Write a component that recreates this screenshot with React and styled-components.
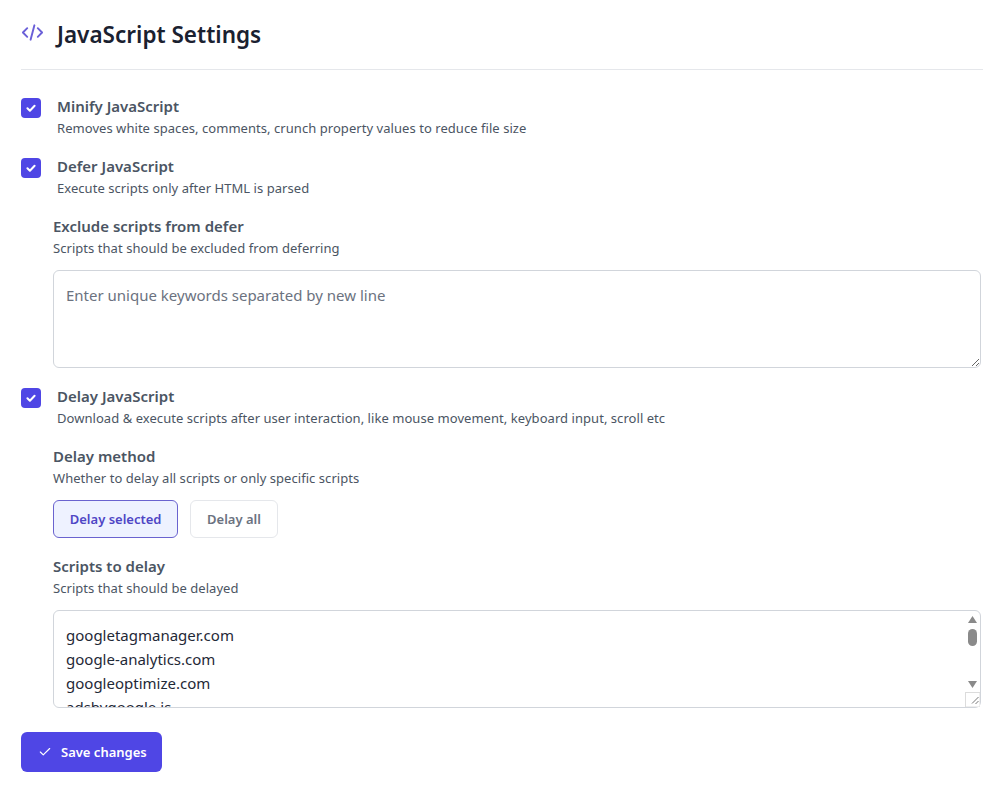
import React from "react";
import styled, { createGlobalStyle } from "styled-components";

const Global = createGlobalStyle`
  html, body { margin: 0; padding: 0; background: #fff; }
  body { font-family: "Noto Sans", "Liberation Sans", sans-serif; color: #374151; }
  * { box-sizing: border-box; }
`;

const Page = styled.main`
  width: 997px;
  height: 796px;
  overflow: hidden;
  padding: 0 14px 0 21px;
`;

const Header = styled.header`
  display: flex;
  align-items: center;
  gap: 13px;
  height: 70px;
  border-bottom: 1px solid #e5e7eb;
`;

const HeaderIcon = styled.svg`
  width: 23px;
  height: 23px;
  margin-top: -4px;
  color: #6a5fd8;
  flex: none;
`;

const Title = styled.h1`
  margin: 0;
  font-size: 22.5px;
  line-height: 32px;
  font-weight: 600;
  color: #1a2130;
`;

const Options = styled.div`
  display: flex;
  flex-direction: column;
  padding-top: 28px;
`;

const CheckRow = styled.div`
  display: flex;
  gap: 16px;
  margin-bottom: ${(p) => p.$mb || 0}px;
`;

const CheckBox = styled.span`
  width: 20px;
  height: 20px;
  border-radius: 4px;
  background: #4f46e5;
  display: flex;
  align-items: center;
  justify-content: center;
  flex: none;
`;

const CheckText = styled.div`
  display: flex;
  flex-direction: column;
  margin-top: -2px;
`;

const Label = styled.div`
  font-size: 15px;
  line-height: 20px;
  font-weight: 600;
  color: #4b5563;
`;

const Hint = styled.div`
  font-size: 13px;
  line-height: 20px;
  margin-top: 2px;
  letter-spacing: 0.05px;
  color: #4b5563;
`;

const Sub = styled.section`
  margin: ${(p) => p.$mt || 0}px 2px ${(p) => p.$mb || 0}px 32px;
`;

const FieldWrap = styled.div`
  position: relative;
  margin-top: 12px;
  height: 98px;
`;

const Area = styled.textarea`
  display: block;
  width: 100%;
  height: 98px;
  padding: 12px;
  border: 1px solid #d1d5db;
  border-radius: 6px;
  outline: none;
  resize: vertical;
  overflow: hidden;
  background: #fff;
  color: #1f2937;
  font-family: inherit;
  font-size: 15px;
  line-height: 24px;
  &::placeholder { color: #6b7280; opacity: 1; }
`;

const FakeBar = styled.svg`
  position: absolute;
  top: 1px;
  right: 1px;
  width: 17px;
  height: 96px;
  pointer-events: none;
`;

const Segments = styled.div`
  display: flex;
  gap: 12px;
  margin-top: 12px;
  margin-bottom: 18px;
`;

const Segment = styled.button`
  height: 38px;
  padding: 0 15.75px;
  border-radius: 6px;
  border: 1px solid ${(p) => (p.$active ? "#6a63cf" : "#e5e7eb")};
  background: ${(p) => (p.$active ? "#eef2ff" : "#fff")};
  color: ${(p) => (p.$active ? "#4f46c5" : "#6b7280")};
  font-family: inherit;
  font-size: 13px;
  font-weight: 600;
`;

const SaveButton = styled.button`
  display: flex;
  align-items: center;
  gap: 9px;
  height: 40px;
  width: 141px;
  margin-top: 24px;
  padding: 0 0 0 17px;
  border: 0;
  border-radius: 6px;
  background: #4f46e5;
  color: #fff;
  font-family: inherit;
  font-size: 13px;
  font-weight: 600;
`;

const Tick = () => (
  <svg width="12" height="12" viewBox="0 0 12 12" fill="none">
    <path d="M2.4 6.3 4.9 8.8 9.6 3.7" stroke="#fff" strokeWidth="2" strokeLinecap="round" strokeLinejoin="round" />
  </svg>
);

const Check = ({ title, hint, mb }) => (
  <CheckRow $mb={mb}>
    <CheckBox><Tick /></CheckBox>
    <CheckText>
      <Label>{title}</Label>
      <Hint>{hint}</Hint>
    </CheckText>
  </CheckRow>
);

const scripts = "googletagmanager.com\ngoogle-analytics.com\ngoogleoptimize.com\nadsbygoogle.js\nxfbml.customerchat.js\nfbevents.js";

export default function App() {
  return (
    <Page>
      <Global />
      <Header>
        <HeaderIcon viewBox="0 0 24 24" fill="none" stroke="currentColor" strokeWidth="2" strokeLinecap="round" strokeLinejoin="round">
          <path d="M6.5 7.5 2 12l4.5 4.5" />
          <path d="M17.5 7.5 22 12l-4.5 4.5" />
          <path d="M14 4.5 10 19.5" />
        </HeaderIcon>
        <Title>JavaScript Settings</Title>
      </Header>
      <Options>
        <Check title="Minify JavaScript" hint="Removes white spaces, comments, crunch property values to reduce file size" mb={20} />
        <Check title="Defer JavaScript" hint="Execute scripts only after HTML is parsed" />
        <Sub $mt={18} $mb={20}>
          <Label>Exclude scripts from defer</Label>
          <Hint>Scripts that should be excluded from deferring</Hint>
          <FieldWrap>
            <Area placeholder="Enter unique keywords separated by new line" />
          </FieldWrap>
        </Sub>
        <Check title="Delay JavaScript" hint="Download & execute scripts after user interaction, like mouse movement, keyboard input, scroll etc" />
        <Sub $mt={18}>
          <Label>Delay method</Label>
          <Hint>Whether to delay all scripts or only specific scripts</Hint>
          <Segments>
            <Segment $active>Delay selected</Segment>
            <Segment>Delay all</Segment>
          </Segments>
          <Label>Scripts to delay</Label>
          <Hint>Scripts that should be delayed</Hint>
          <FieldWrap>
            <Area readOnly defaultValue={scripts} />
            <FakeBar viewBox="0 0 17 96">
              <path d="M5 12h9L9.5 5z" fill="#8a8a8a" />
              <rect x="5" y="18" width="9" height="17" rx="4.5" fill="#8a8a8a" />
              <path d="M5 70h9l-4.5 7z" fill="#8a8a8a" />
              <rect x="2.5" y="81.5" width="14.5" height="14.5" fill="#fff" stroke="#dcdcdc" />
              <path d="M15.5 86 9 92.5M15.5 90l-3 3" stroke="#555" strokeWidth="0.8" />
            </FakeBar>
          </FieldWrap>
        </Sub>
        <SaveButton>
          <svg width="14" height="14" viewBox="0 0 24 24" fill="none" stroke="#fff" strokeWidth="2" strokeLinecap="round" strokeLinejoin="round">
            <path d="M20 6 9 17l-5-5" />
          </svg>
          Save changes
        </SaveButton>
      </Options>
    </Page>
  );
}
